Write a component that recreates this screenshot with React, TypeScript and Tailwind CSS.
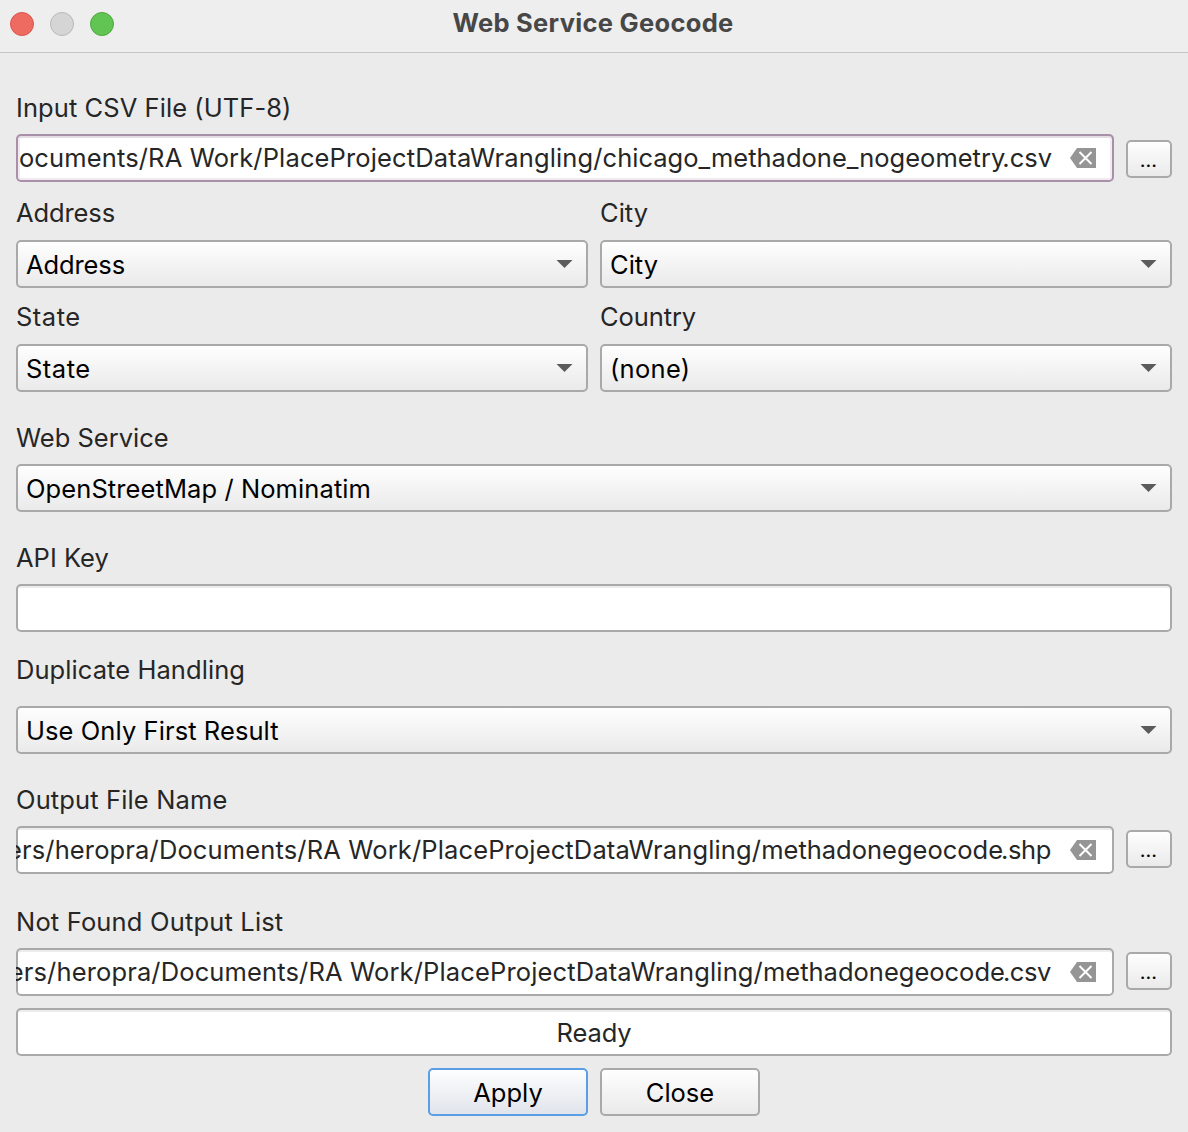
import React from "react";

const frame = "rounded-[5px] shadow-[inset_0_0_0_2px_#a9a9a9]";

function Label({ children, className = "" }: { children: React.ReactNode; className?: string }) {
  return (
    <div className={`flex h-8 items-center whitespace-nowrap text-[#262626] ${className}`}>
      <span>{children}</span>
    </div>
  );
}

function Select({ value, className = "" }: { value: string; className?: string }) {
  return (
    <button
      className={`flex h-12 w-full items-center justify-between whitespace-nowrap bg-linear-to-b from-white to-[#e9e9e9] pl-[10px] pr-[15px] pt-0.5 text-black ${frame} ${className}`}
    >
      <span>{value}</span>
      <svg width="17" height="8" viewBox="0 0 17 8" className="mb-0.5">
        <path d="M.5 0H16.500L8.500 8Z" fill="#5b5b5b" />
      </svg>
    </button>
  );
}

function ClearIcon() {
  return (
    <svg width="26" height="20" viewBox="0 0 26 20" className="ml-[18px] shrink-0">
      <path d="M0 10L7 0H26V20H7Z" fill="#959595" />
      <path d="M9.500 4L21.500 16M21.500 4L9.500 16" stroke="#fff" strokeWidth="2" />
    </svg>
  );
}

function FileRow({
  folder,
  name,
  ext,
  focused = false,
}: {
  folder: string;
  name: string;
  ext: string;
  focused?: boolean;
}) {
  return (
    <div className="flex">
      <div
        className={
          focused
            ? "flex h-12 flex-1 rounded-[5px] bg-white pl-0.5 pr-[18px] shadow-[inset_0_0_0_2px_#a890a9,inset_0_4px_0_0_#e4dee4,inset_0_0_0_4px_#f1ebf1]"
            : "flex h-12 flex-1 rounded-[5px] bg-white pr-[18px] shadow-[inset_0_0_0_2px_#a9a9a9,inset_0_4px_0_0_#ececec]"
        }
      >
        <div className="flex h-12 w-0 flex-1 items-center justify-end overflow-hidden whitespace-nowrap text-[#262626]">
          <span className={focused ? "shrink-0" : "shrink-0 pr-px"}>
            <span className="tracking-[0.14px]">{folder}</span>
            <span>{name}</span>
            <span className={focused ? "-ml-[3px]" : "-ml-0.5 tracking-[-0.4px]"}>{ext}</span>
          </span>
          <ClearIcon />
        </div>
      </div>
      <button
        className={`ml-3 flex h-[38px] w-[46px] items-center justify-center bg-linear-to-b from-white to-[#e9e9e9] pr-px pt-px text-[20px] text-black ${frame} ${focused ? "mt-1.5" : "mt-1"}`}
      >
        ...
      </button>
    </div>
  );
}

export default function App() {
  return (
    <div className="h-[1132px] w-[1188px] overflow-hidden bg-[#ebebeb] font-['Inter',sans-serif] text-[25.5px] leading-8">
      <header className="grid h-[53px] grid-cols-[1fr_auto_1fr] border-b border-[#c4c4c4] bg-[#eeeeee]">
        <div className="flex gap-4 pl-2.5 pt-3">
          <span className="size-6 rounded-full border border-[#d9564c] bg-[#ed6b60]" />
          <span className="size-6 rounded-full border border-[#b9b9b9] bg-[#d5d5d5]" />
          <span className="size-6 rounded-full border border-[#50a73f] bg-[#61c554]" />
        </div>
        <h1 className="pr-0.5 pt-[7px] font-bold tracking-[0.3px] text-[#474747]">Web Service Geocode</h1>
      </header>
      <main className="px-4 pt-[39px]">
        <Label className="tracking-[0.07px]">Input CSV File (UTF-8)</Label>
        <div className="mt-2.5">
          <FileRow
            focused
            folder="ocuments/RA Work/PlaceProjectDataWrangling/"
            name="chicago_methadone_nogeometry"
            ext=".csv"
          />
        </div>
        <div className="mt-[15px] grid grid-cols-2 gap-x-3">
          <Label className="tracking-[-0.1px]">Address</Label>
          <Label>City</Label>
          <Select value="Address" className="mt-[11px] tracking-[-0.1px]" />
          <Select value="City" className="mt-[11px]" />
          <Label className="mt-[13px] tracking-[0.5px]">State</Label>
          <Label className="mt-[13px] tracking-[-0.1px]">Country</Label>
          <Select value="State" className="mt-[11px] tracking-[0.5px]" />
          <Select value="(none)" className="mt-[11px] tracking-[0.3px]" />
        </div>
        <Label className="mt-[30px]">Web Service</Label>
        <Select value="OpenStreetMap / Nominatim" className="mt-2.5 tracking-[0.09px]" />
        <Label className="mt-[30px]">API Key</Label>
        <div className="mt-2.5 h-12 rounded-[5px] bg-white shadow-[inset_0_0_0_2px_#a9a9a9,inset_0_4px_0_0_#ececec]" />
        <Label className="mt-[22px] tracking-[0.07px]">Duplicate Handling</Label>
        <Select value="Use Only First Result" className="mt-5 tracking-[0.08px]" />
        <Label className="mt-[30px] tracking-[0.13px]">Output File Name</Label>
        <div className="mt-2.5">
          <FileRow
            folder="ers/heropra/Documents/RA Work/PlaceProjectDataWrangling/"
            name="methadonegeocode"
            ext=".shp"
          />
        </div>
        <Label className="mt-8 tracking-[0.17px]">Not Found Output List</Label>
        <div className="mt-2.5">
          <FileRow
            folder="ers/heropra/Documents/RA Work/PlaceProjectDataWrangling/"
            name="methadonegeocode"
            ext=".csv"
          />
        </div>
        <div className="mt-3 flex h-12 items-center justify-center rounded-[5px] bg-white pt-0.5 tracking-[-0.1px] text-[#262626] shadow-[inset_0_0_0_2px_#a9a9a9,inset_0_4px_0_0_#ececec]">
          Ready
        </div>
        <div className="mt-3 flex justify-center gap-3">
          <button className="h-12 w-40 rounded-[5px] bg-linear-to-b from-white to-[#dfe3ea] pt-0.5 text-black shadow-[inset_0_0_0_2px_#5a9fe6]">
            Apply
          </button>
          <button className={`h-12 w-40 bg-linear-to-b from-white to-[#e9e9e9] pt-0.5 text-black ${frame}`}>Close</button>
        </div>
      </main>
    </div>
  );
}
